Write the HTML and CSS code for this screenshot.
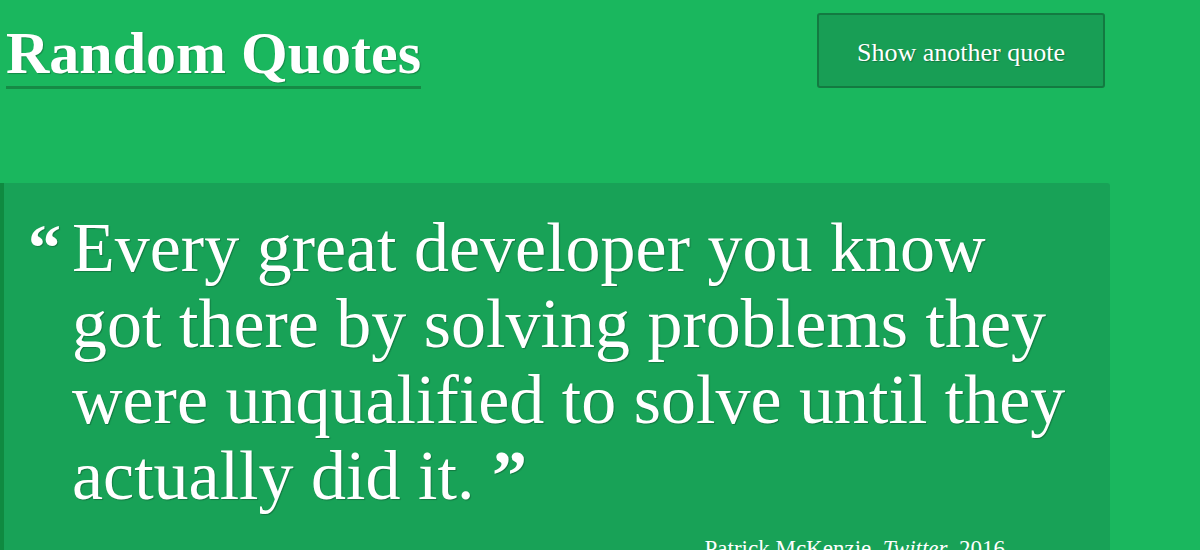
FILE: index.html
```html
<!DOCTYPE html>
<html>
<head>
<meta charset="utf-8">
<link rel="stylesheet" href="styles.css">
</head>
<body>
<div class="page">
  <header class="top">
    <h1 class="title">Random Quotes</h1>
    <button class="btn">Show another quote</button>
  </header>
  <blockquote class="quote">
    <p class="quote-text"><span class="mark open">“</span><span class="body">Every great developer you know<br>got there by solving problems they<br>were unqualified to solve until they<br>actually did it. <span class="mark close">”</span></span></p>
    <footer class="cite">—Patrick McKenzie, <em>Twitter</em>, 2016</footer>
  </blockquote>
</div>
</body>
</html>
```
FILE: styles.css
```css
html, body {
  margin: 0;
  padding: 0;
  background: #1ab75e;
  height: 100%;
  overflow: hidden;
}
body {
  font-family: "Liberation Serif", "DejaVu Serif", serif;
  color: #fff;
}
.page {
  width: 1110px;
}
.top {
  display: flex;
  justify-content: space-between;
  align-items: flex-start;
  padding: 13px 5px 0 6px;
  height: 170px;
  box-sizing: border-box;
}
.title {
  margin: 0;
  padding-top: 10px;
  font-size: 60px;
  font-weight: bold;
  line-height: 1;
  border-bottom: 3px solid #168a45;
  padding-bottom: 3px;
  text-shadow: 1px 1px 1px rgba(0,0,0,0.25);
}
.btn {
  width: 288px;
  height: 75px;
  padding: 4px 0 0 0;
  background: #189e55;
  border: 2px solid #137a41;
  border-radius: 3px;
  color: #fff;
  font-family: inherit;
  font-size: 26px;
  text-shadow: 1px 1px 1px rgba(0,0,0,0.25);
}
.quote {
  margin: 13px 0 0 0;
  background: #18a257;
  border-left: 4px solid #0f8a40;
  border-top-right-radius: 3px;
  padding: 27px 30px 20px 24px;
  height: 400px;
}
.quote-text {
  margin: 0;
  display: flex;
  font-size: 70px;
  line-height: 76px;
  text-shadow: 1px 1px 1px rgba(0,0,0,0.25);
}
.mark {
  font-weight: bold;
}
.open {
  width: 44px;
  flex: none;
  font-size: 66px;
}
.cite {
  text-align: right;
  padding-right: 75px;
  margin-top: 20px;
  font-size: 23px;
  line-height: 30px;
}
```
